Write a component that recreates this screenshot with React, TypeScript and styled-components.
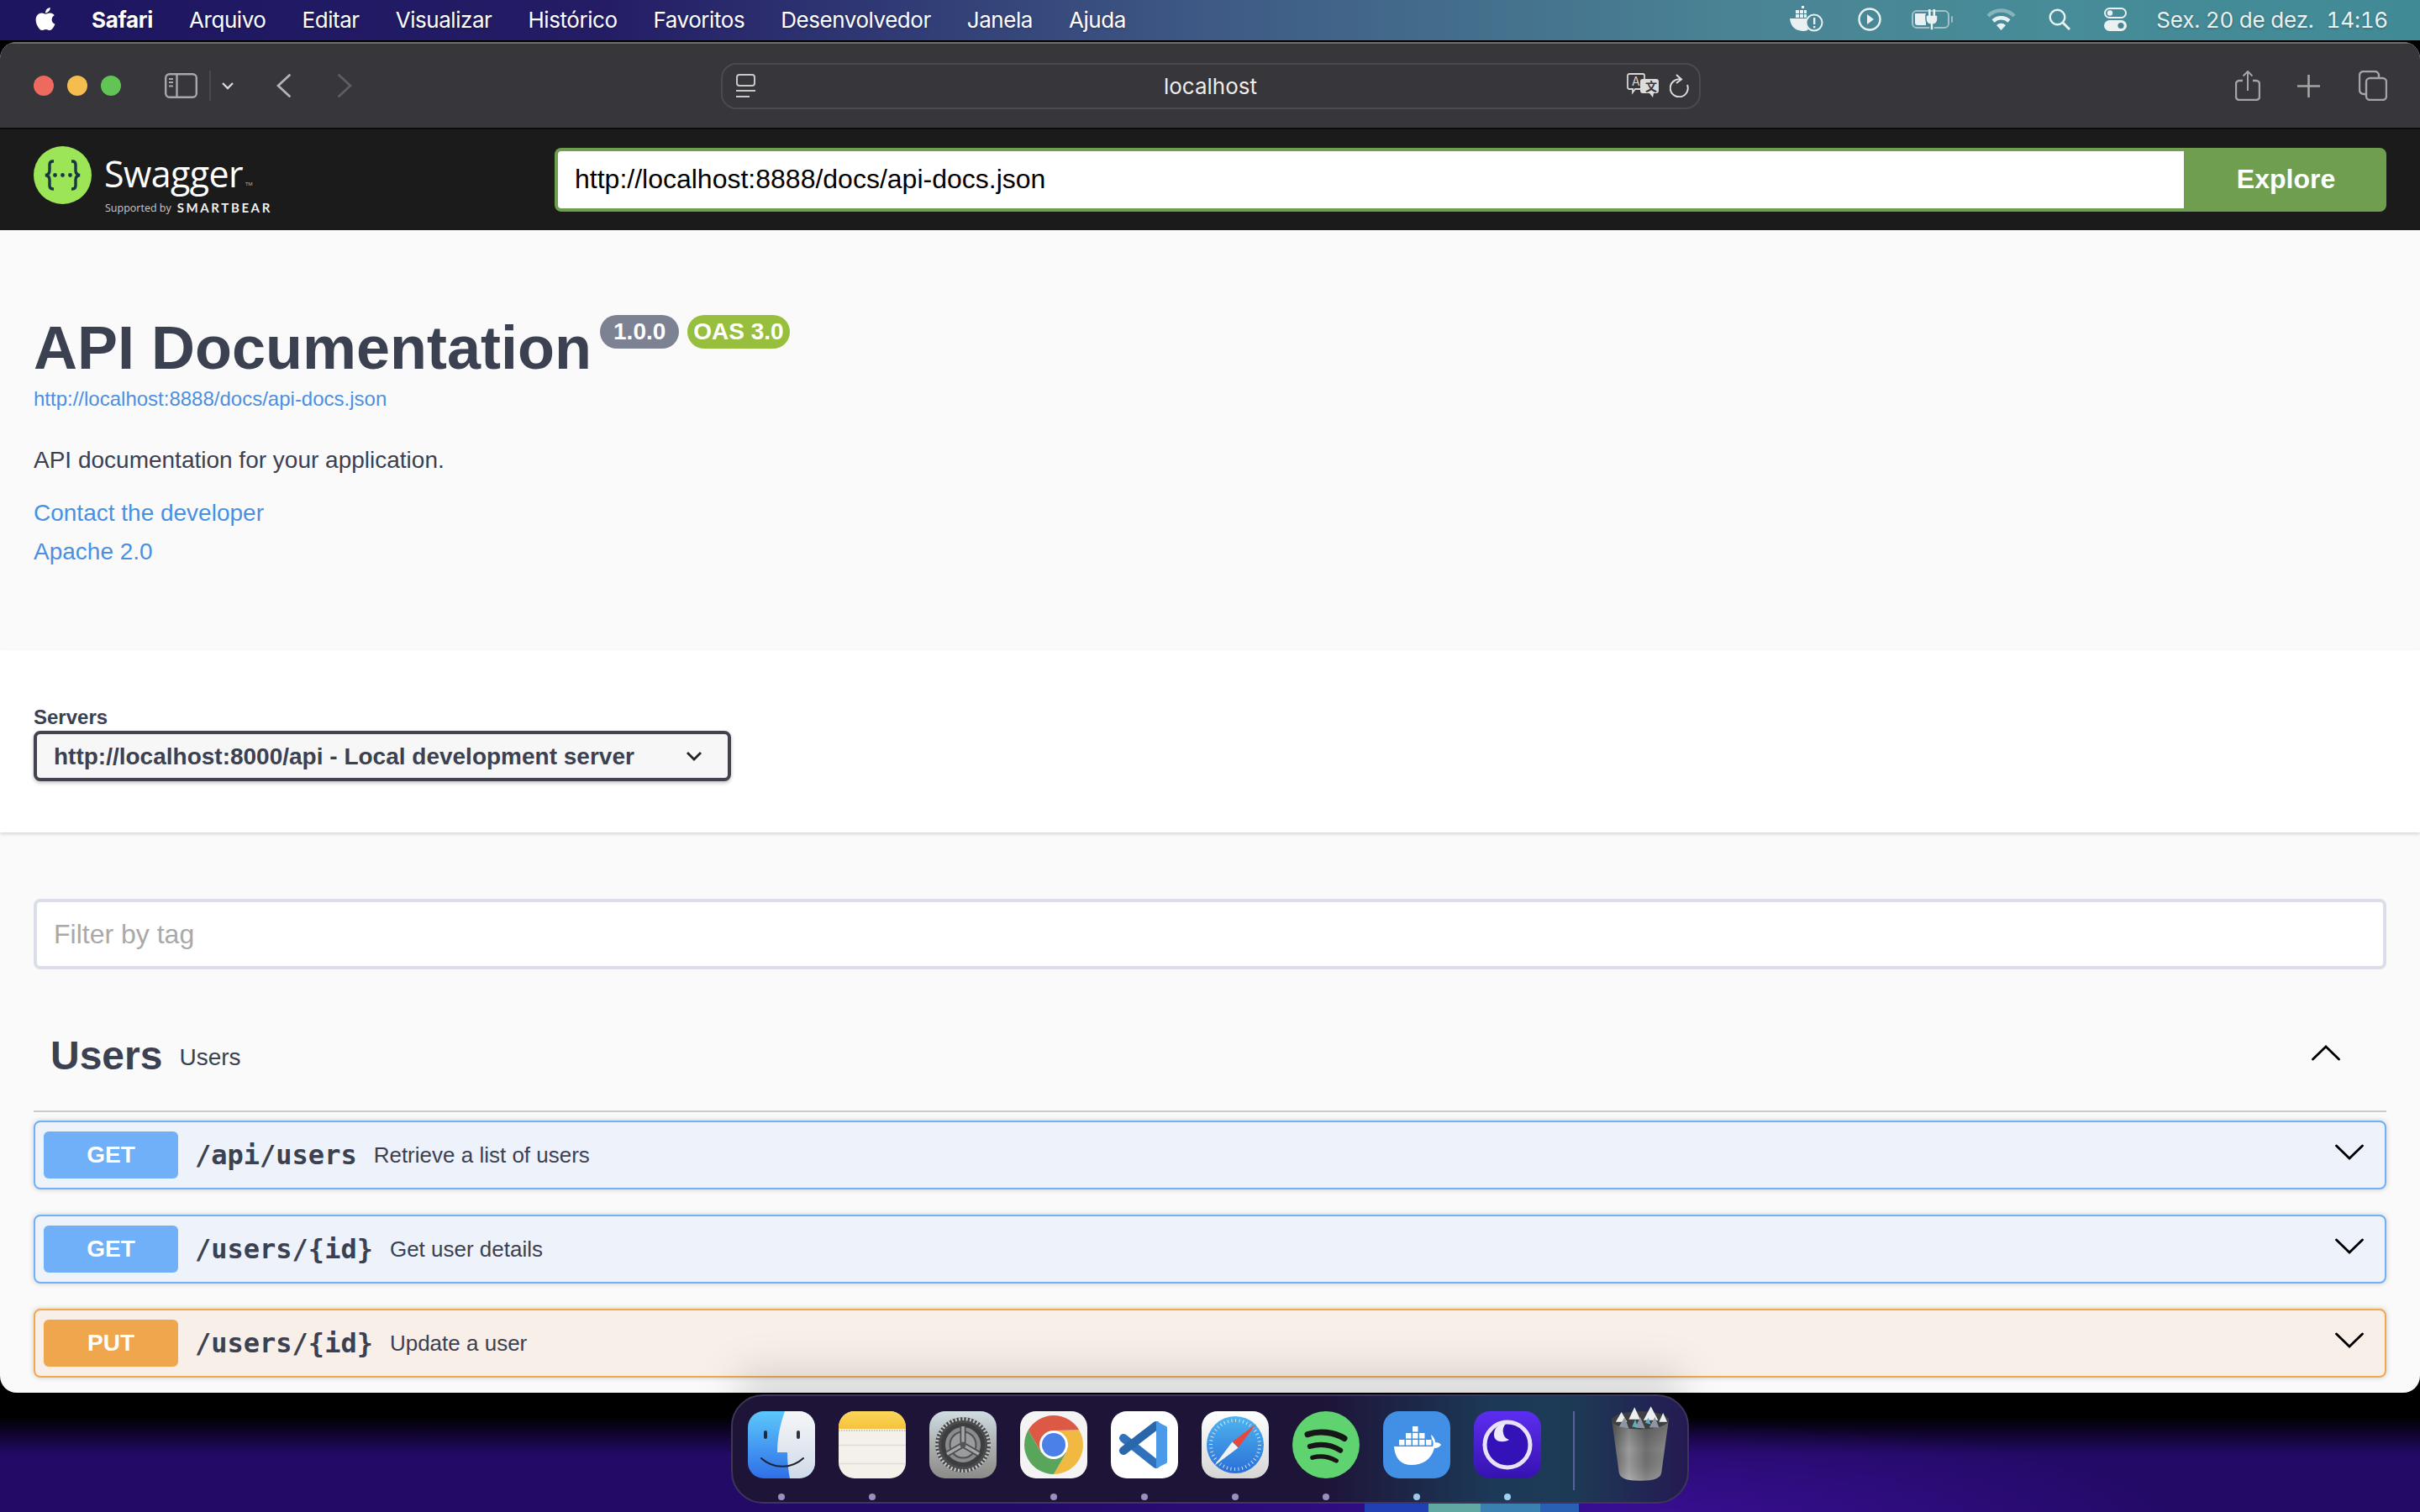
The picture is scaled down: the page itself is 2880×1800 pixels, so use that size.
import styled, { createGlobalStyle } from "styled-components";
import { FaApple } from "react-icons/fa";

const GlobalStyle = createGlobalStyle`
  html, body {
    margin: 0;
    padding: 0;
    background: #000;
    font-family: "Liberation Sans", Arial, sans-serif;
  }
  * { box-sizing: border-box; }
`;

const Desktop = styled.div`
  width: 2880px;
  height: 1800px;
  position: relative;
  overflow: hidden;
  display: flex;
  flex-direction: column;
  background:
    linear-gradient(90deg, #2140b4 0%, #2140b4 30%, #62a8a2 30%, #62a8a2 54%, #3a80b0 54%, #3a80b0 82%, #2a60b4 82%, #2a60b4 100%) 1624px 1790px / 255px 10px no-repeat,
    radial-gradient(ellipse 700px 120px at 1900px 1810px, #3a0f96 0%, rgba(58, 15, 150, 0) 100%),
    linear-gradient(180deg, #000 0, #000 1686px, #230a66 1732px, #230a66 100%);
`;

const MenuBar = styled.header`
  height: 48px;
  flex: none;
  display: flex;
  align-items: center;
  padding: 0 38px 2px 41px;
  color: #fff;
  font-family: Inter, "Liberation Sans", sans-serif;
  font-size: 26px;
  background: linear-gradient(90deg, #1d1560 0%, #241d66 25%, #3e5a85 50%, #4a8494 72%, #478c98 85%, #408a96 100%);
  text-shadow: 0 1px 3px rgba(0, 0, 0, 0.25);
`;

const AppleMark = styled.span`
  width: 26px;
  display: flex;
  justify-content: center;
  margin-right: 42px;
  margin-top: -2px;
  font-size: 31px;
  line-height: 0;
`;

const MenuList = styled.nav`
  display: flex;
  gap: 43px;
`;

const MenuItem = styled.span<{ $bold?: boolean }>`
  font-weight: ${(p) => (p.$bold ? 700 : 400)};
  letter-spacing: ${(p) => (p.$bold ? "-0.3px" : "-0.45px")};
  white-space: nowrap;
`;

const StatusArea = styled.div`
  margin-left: auto;
  display: flex;
  align-items: center;
  color: #e9f1f3;
`;

const StatusIcon = styled.svg<{ $left: number }>`
  display: block;
  margin-left: ${(p) => p.$left}px;
  flex: none;
`;

const Clock = styled.span<{ $left: number }>`
  margin-left: ${(p) => p.$left}px;
  white-space: nowrap;
  font-size: 26px;
  font-variant-numeric: tabular-nums;
  letter-spacing: -0.2px;
`;

const Browser = styled.main`
  margin-top: 2px;
  height: 1608px;
  flex: none;
  position: relative;
  overflow: hidden;
  border-radius: 20px;
  background: #fafafa;
  display: flex;
  flex-direction: column;
`;

const Toolbar = styled.div`
  height: 104px;
  flex: none;
  display: flex;
  align-items: center;
  padding-left: 40px;
  background: #37363b;
  border-top: 2px solid #6c6c6e;
  border-bottom: 2px solid #0a0a0a;
`;

const Lights = styled.div`
  display: flex;
  gap: 16px;
`;

const Light = styled.span<{ $color: string }>`
  width: 24px;
  height: 24px;
  border-radius: 50%;
  background: ${(p) => p.$color};
`;

const ToolIcon = styled.svg<{ $left: number }>`
  display: block;
  flex: none;
  margin-left: ${(p) => p.$left}px;
`;

const ToolDivider = styled.span`
  width: 2px;
  height: 36px;
  margin-left: 14px;
  background: #4a4a4e;
`;

const AddressBar = styled.div`
  width: 1166px;
  height: 55px;
  margin-left: 439px;
  flex: none;
  display: flex;
  align-items: center;
  padding: 0 12px 0 16px;
  border: 2px solid #4b4b4f;
  border-radius: 18px;
`;

const AddressText = styled.span`
  flex: 1;
  text-align: center;
  padding-left: 46px;
  color: #ececec;
  font-family: Inter, "Liberation Sans", sans-serif;
  font-size: 26px;
`;

const AddressIcons = styled.div`
  display: flex;
  align-items: center;
  gap: 13px;
`;

const Topbar = styled.div`
  height: 120px;
  flex: none;
  display: flex;
  align-items: center;
  padding: 0 40px;
  background: #1b1b1b;
`;

const Logo = styled.div`
  width: 620px;
  flex: none;
  display: flex;
  align-items: center;
  gap: 15px;
  margin-top: -12px;
  color: #fff;
`;

const LogoText = styled.div`
  display: flex;
  flex-direction: column;
  padding-top: 24px;
`;

const Wordmark = styled.div`
  font-family: "Open Sans", sans-serif;
  font-size: 43px;
  font-weight: 400;
  line-height: 46px;
  letter-spacing: -0.6px;
  color: #fff;
`;

const Tm = styled.sup`
  font-size: 6px;
  margin-left: 3px;
  vertical-align: 2px;
  line-height: 0;
  letter-spacing: 0;
  color: #bbb;
`;

const Supported = styled.div`
  display: flex;
  align-items: center;
  gap: 7px;
  height: 18px;
  margin-top: 8px;
  padding-left: 1px;
  font-family: "Open Sans", sans-serif;
  font-size: 12.5px;
  white-space: nowrap;
  color: #c8c8c8;
`;

const BearName = styled.span`
  font-family: Lato, sans-serif;
  font-size: 15px;
  font-weight: 700;
  letter-spacing: 2.6px;
  color: #f0f0f0;
`;

const UrlForm = styled.div`
  flex: 1;
  height: 76px;
  display: flex;
`;

const UrlInput = styled.div`
  flex: 1;
  display: flex;
  align-items: center;
  padding: 0 20px 2px;
  border: 4px solid #6f9f4e;
  border-right: 0;
  border-radius: 8px 0 0 8px;
  background: #fff;
  color: #000;
  font-size: 32px;
`;

const ExploreButton = styled.div`
  width: 241px;
  display: flex;
  align-items: center;
  justify-content: center;
  padding: 0 0 1px 2px;
  background: #6f9f4e;
  border-radius: 0 8px 8px 0;
  color: #fff;
  font-size: 32px;
  font-weight: 700;
`;

const Info = styled.section`
  height: 500px;
  flex: none;
  padding: 100px 40px 0;
  background: #fafafa;
  color: #3b4151;
`;

const TitleRow = styled.div`
  display: flex;
  align-items: flex-start;
`;

const Title = styled.h1`
  margin: 0 10px 0 0;
  font-size: 72px;
  line-height: 80px;
  font-weight: 700;
  color: #3b4151;
`;

const Pill = styled.span<{ $color: string; $pad: number }>`
  height: 40px;
  margin: 1px 10px 0 0;
  padding: 0 ${(p) => p.$pad}px;
  display: flex;
  align-items: center;
  border-radius: 22px;
  background: ${(p) => p.$color};
  color: #fff;
  font-size: 28px;
  font-weight: 700;
`;

const SpecLink = styled.a`
  display: block;
  margin-top: 7px;
  font-size: 24px;
  line-height: 28px;
  color: #4a90e2;
`;

const Description = styled.p`
  margin: 39px 0 23px;
  font-size: 28px;
  line-height: 40px;
  color: #3b4151;
`;

const InfoLink = styled.a`
  display: block;
  margin-bottom: 6px;
  font-size: 28px;
  line-height: 40px;
  color: #4a90e2;
`;

const Servers = styled.section`
  height: 217px;
  flex: none;
  padding: 66px 40px 0;
  background: #fff;
  box-shadow: 0 2px 4px rgba(0, 0, 0, 0.15);
  position: relative;
`;

const ServersLabel = styled.div`
  font-size: 24px;
  line-height: 28px;
  font-weight: 700;
  color: #3b4151;
  margin-bottom: 2px;
`;

const ServerSelect = styled.div`
  width: 830px;
  height: 60px;
  display: flex;
  align-items: center;
  justify-content: space-between;
  padding: 1px 30px 0 20px;
  border: 4px solid #41444e;
  border-radius: 8px;
  background: #f7f7f7;
  box-shadow: 0 2px 4px rgba(0, 0, 0, 0.25);
  font-size: 28px;
  font-weight: 700;
  color: #3b4151;
`;

const Content = styled.section`
  padding: 79px 40px 0;
  color: #3b4151;
`;

const FilterBox = styled.div`
  height: 84px;
  display: flex;
  align-items: center;
  padding: 0 20px 0 20px;
  border: 4px solid #d9dee8;
  border-radius: 8px;
  background: #fff;
  color: #a9a9a9;
  font-size: 32px;
`;

const TagRow = styled.div`
  height: 134px;
  margin-top: 36px;
  display: flex;
  align-items: center;
  padding: 2px 55px 0 20px;
  border-bottom: 2px solid #cbcbcb;
`;

const TagName = styled.h3`
  margin: 0 20px 0 0;
  font-size: 48px;
  line-height: 60px;
  font-weight: 700;
  color: #3b4151;
`;

const TagNote = styled.span`
  flex: 1;
  font-size: 28px;
  padding-top: 4px;
  color: #3b4151;
`;

const Ops = styled.div`
  margin-top: 10px;
  display: flex;
  flex-direction: column;
  gap: 30px;
`;

const OpRow = styled.div<{ $border: string; $bg: string }>`
  height: 82px;
  display: flex;
  align-items: center;
  padding: 0 25px 0 10px;
  border: 2px solid ${(p) => p.$border};
  border-radius: 8px;
  background: ${(p) => p.$bg};
  box-shadow: 0 0 6px rgba(0, 0, 0, 0.19);
`;

const Method = styled.span<{ $bg: string }>`
  width: 160px;
  height: 56px;
  flex: none;
  display: flex;
  align-items: center;
  justify-content: center;
  border-radius: 6px;
  background: ${(p) => p.$bg};
  color: #fff;
  font-size: 28px;
  font-weight: 700;
`;

const OpPath = styled.span`
  margin: 0 20px;
  font-family: "DejaVu Sans Mono", monospace;
  font-size: 32px;
  font-weight: 700;
  color: #3b4151;
`;

const OpSummary = styled.span`
  flex: 1;
  font-size: 26px;
  color: #3b4151;
`;

const Chevron = styled.svg`
  display: block;
  flex: none;
  margin-top: -7px;
`;

const DockShade = styled.div`
  position: absolute;
  left: 880px;
  width: 1120px;
  bottom: -38px;
  height: 62px;
  background: rgba(0, 0, 0, 0.14);
  filter: blur(24px);
`;

const Dock = styled.footer`
  margin-top: 2px;
  align-self: center;
  width: 1140px;
  height: 130px;
  flex: none;
  display: flex;
  padding: 18px 0 0 18px;
  border: 2px solid #3e3558;
  border-radius: 38px;
  background: linear-gradient(90deg, #1e1438 0%, #1e1438 62%, #1c3a58 80%, #1d3a55 88%, #241a52 100%);
`;

const DockItem = styled.div`
  width: 80px;
  margin-right: 28px;
  display: flex;
  flex-direction: column;
  align-items: center;
  flex: none;
`;

const DockTile = styled.div`
  width: 80px;
  height: 80px;
  display: flex;
  align-items: center;
  justify-content: center;
  overflow: visible;
`;

const DockDot = styled.span<{ $on: boolean; $color?: string }>`
  width: 8px;
  height: 8px;
  margin-top: 18px;
  border-radius: 50%;
  background: ${(p) => (p.$on ? p.$color || "#9b8fc0" : "transparent")};
`;

const DockDivider = styled.span`
  width: 2px;
  height: 94px;
  margin: 0 38px 0 10px;
  background: #56609a;
  flex: none;
`;

const TrashSlot = styled.div`
  width: 80px;
  flex: none;
  margin-top: -8px;
  display: flex;
  justify-content: center;
`;

const stroke = "#e9f1f3";

const DockerStatus = () => (
  <StatusIcon $left={0} width="40" height="32" viewBox="0 0 40 32">
    <g fill={stroke}>
      <rect x="14" y="0" width="3" height="3" />
      <rect x="7" y="5" width="4" height="4" />
      <rect x="12" y="5" width="4" height="4" />
      <rect x="17" y="5" width="3" height="4" />
      <rect x="7" y="10" width="4" height="4" />
      <rect x="12" y="10" width="4" height="4" />
      <rect x="17" y="10" width="3" height="4" />
      <path d="M0 15h20v3a11 11 0 0 0 2 10c-1 1-3 2-5 2C7 30 1 25 0 15z" />
    </g>
    <circle cx="29" cy="20" r="9.5" fill="none" stroke={stroke} strokeWidth="2" />
    <rect x="28" y="14" width="2.4" height="8" fill={stroke} />
    <rect x="28" y="24" width="2.4" height="2.4" fill={stroke} />
  </StatusIcon>
);

const PlayStatus = () => (
  <StatusIcon $left={41} width="28" height="28" viewBox="0 0 28 28">
    <circle cx="14" cy="14" r="12.5" fill="none" stroke={stroke} strokeWidth="2.4" />
    <path d="M11 8l8 6-8 6z" fill={stroke} />
  </StatusIcon>
);

const BatteryStatus = () => (
  <StatusIcon $left={36} width="50" height="26" viewBox="0 0 50 26">
    <rect x="1" y="3" width="43" height="20" rx="5" fill="none" stroke={stroke} strokeOpacity="0.55" strokeWidth="2" />
    <rect x="47" y="9" width="2" height="8" rx="1" fill={stroke} fillOpacity="0.5" />
    <path d="M4 6h13v14H7a3 3 0 0 1-3-3z" fill={stroke} />
    <path d="M17 8h14v5c0 4-3 6-5 6v7h-4v-7c-2 0-5-2-5-6z" fill={stroke} stroke="#4a8494" strokeWidth="1.5" />
    <rect x="20" y="1" width="2.6" height="8" fill={stroke} />
    <rect x="25.5" y="1" width="2.6" height="8" fill={stroke} />
  </StatusIcon>
);

const WifiStatus = () => (
  <StatusIcon $left={39} width="35" height="26" viewBox="0 0 35 26">
    <path d="M2 9a22 22 0 0 1 31 0" fill="none" stroke={stroke} strokeOpacity="0.4" strokeWidth="4.5" />
    <path d="M8 15a14 14 0 0 1 19 0" fill="none" stroke={stroke} strokeWidth="4.5" />
    <path d="M12 20a8 8 0 0 1 11 0l-5.500 6z" fill={stroke} />
  </StatusIcon>
);

const SearchStatus = () => (
  <StatusIcon $left={39} width="26" height="26" viewBox="0 0 26 26">
    <circle cx="10.500" cy="10.500" r="8.800" fill="none" stroke={stroke} strokeWidth="2.4" />
    <path d="M17 17l8 8" stroke={stroke} strokeWidth="3" />
  </StatusIcon>
);

const ControlStatus = () => (
  <StatusIcon $left={40} width="27" height="28" viewBox="0 0 27 28">
    <rect x="1" y="1" width="25" height="11" rx="5.500" fill="none" stroke={stroke} strokeWidth="2" />
    <circle cx="7" cy="6.500" r="3.200" fill={stroke} />
    <rect x="0" y="15" width="27" height="13" rx="6.500" fill={stroke} />
    <circle cx="20" cy="21.500" r="3.600" fill="#4a8494" />
  </StatusIcon>
);

const SidebarIcon = () => (
  <ToolIcon $left={52} width="39" height="30" viewBox="0 0 39 30" fill="none" stroke="#a8a8aa" strokeWidth="2.4">
    <rect x="1.200" y="1.200" width="36.600" height="27.600" rx="4.500" />
    <path d="M14.500 1.500v27" />
    <path d="M5 7h5M5 11h5M5 15.500h5" strokeWidth="1.800" />
  </ToolIcon>
);

const SmallChevron = () => (
  <ToolIcon $left={13} width="14" height="9" viewBox="0 0 14 9" fill="none" stroke="#d8d8d8" strokeWidth="2.400">
    <path d="M1 1l6 6 6-6" />
  </ToolIcon>
);

const Arrow = ({ left, dir, color }: { left: number; dir: "l" | "r"; color: string }) => (
  <ToolIcon $left={left} width="17" height="28" viewBox="0 0 17 28" fill="none" stroke={color} strokeWidth="2.800" strokeLinecap="round">
    <path d={dir === "l" ? "M15.500 1.500L2 14l13.500 12.500" : "M1.500 1.500L15 14 1.500 26.500"} />
  </ToolIcon>
);

const PageMenuIcon = () => (
  <svg width="23" height="28" viewBox="0 0 23 28" fill="none" stroke="#c8c8c8" strokeWidth="2">
    <rect x="1" y="1" width="21" height="13" rx="3" />
    <path d="M0 20h23M0 27h16" />
  </svg>
);

const TranslateIcon = () => (
  <svg width="38" height="30" viewBox="0 0 38 30">
    <path d="M3 1h16a2 2 0 0 1 2 2v14a2 2 0 0 1-2 2H10l-3 4v-4H3a2 2 0 0 1-2-2V3a2 2 0 0 1 2-2z" fill="#37363b" stroke="#d6d6d6" strokeWidth="1.800" />
    <text x="6" y="15" fontSize="14" fontFamily="Inter, sans-serif" fill="#d6d6d6">A</text>
    <path d="M19 7h16a3 3 0 0 1 3 3v11a3 3 0 0 1-3 3h-3l-1 5-4-5h-8a3 3 0 0 1-3-3V10a3 3 0 0 1 3-3z" fill="#dcdcdc" />
    <text x="22" y="21" fontSize="14" fontWeight="700" fontFamily="'Noto Sans CJK SC', sans-serif" fill="#37363b">文</text>
  </svg>
);

const ReloadIcon = () => (
  <svg width="23" height="28" viewBox="0 0 23 28" fill="none" stroke="#dcdcdc" strokeWidth="2">
    <path d="M13 6.500A10.500 10.500 0 1 0 21 13" />
    <path d="M8 1l6 5.500L8 11" />
  </svg>
);

const ShareIcon = () => (
  <ToolIcon $left={636} width="30" height="36" viewBox="0 0 30 36" fill="none" stroke="#a5a5a8" strokeWidth="2.400">
    <path d="M9 12H5a4 4 0 0 0-4 4v15a4 4 0 0 0 4 4h20a4 4 0 0 0 4-4V16a4 4 0 0 0-4-4h-4" />
    <path d="M15 24V1M9.500 6.500L15 1l5.500 5.500" strokeWidth="2" />
  </ToolIcon>
);

const PlusIcon = () => (
  <ToolIcon $left={44} width="27" height="27" viewBox="0 0 27 27" stroke="#a5a5a8" strokeWidth="2.600">
    <path d="M13.500 0v27M0 13.500h27" />
  </ToolIcon>
);

const TabsIcon = () => (
  <ToolIcon $left={46} width="34" height="36" viewBox="0 0 34 36" fill="none" stroke="#a5a5a8" strokeWidth="2.400">
    <path d="M9 28H6a5 5 0 0 1-5-5V6a5 5 0 0 1 5-5h13a5 5 0 0 1 5 5v3" />
    <rect x="9" y="9" width="24" height="26" rx="4.500" />
  </ToolIcon>
);

const SwaggerMark = () => (
  <svg width="69" height="69" viewBox="0 0 69 69">
    <circle cx="34.500" cy="34.500" r="34.500" fill="#9ce556" />
    <g fill="none" stroke="#173646" strokeWidth="3.400">
      <path d="M24 18h-1c-3 0-4 1.500-4 4v7c0 3-1.500 5-5 5.500 3.500.5 5 2.500 5 5.500v7c0 2.500 1 4 4 4h1" />
      <path d="M45 18h1c3 0 4 1.500 4 4v7c0 3 1.500 5 5 5.500-3.500.5-5 2.500-5 5.500v7c0 2.500-1 4-4 4h-1" />
    </g>
    <g fill="#173646">
      <circle cx="25.500" cy="34.500" r="2.400" />
      <circle cx="34.500" cy="34.500" r="2.400" />
      <circle cx="43.500" cy="34.500" r="2.400" />
    </g>
  </svg>
);

const BigChevron = ({ up }: { up?: boolean }) => (
  <Chevron width="34" height="19" viewBox="0 0 34 19" fill="none" stroke="#000" strokeWidth="2.800" strokeLinecap="round">
    <path d={up ? "M1.500 17L17 2l15.500 15" : "M1.500 2L17 17 32.500 2"} />
  </Chevron>
);

const SelectChevron = () => (
  <svg width="20" height="13" viewBox="0 0 20 13" fill="none" stroke="#222" strokeWidth="2.800">
    <path d="M2 2l8 8 8-8" />
  </svg>
);

const FinderIcon = () => (
  <svg width="80" height="80" viewBox="0 0 80 80">
    <defs>
      <linearGradient id="finderBlue" x1="0" y1="0" x2="0" y2="1">
        <stop offset="0" stopColor="#5cc8fb" />
        <stop offset="1" stopColor="#2f6fe8" />
      </linearGradient>
      <linearGradient id="finderLight" x1="0" y1="0" x2="0" y2="1">
        <stop offset="0" stopColor="#f5f6f8" />
        <stop offset="1" stopColor="#d0dbe9" />
      </linearGradient>
      <clipPath id="finderClip">
        <rect width="80" height="80" rx="19" />
      </clipPath>
    </defs>
    <g clipPath="url(#finderClip)">
      <rect width="80" height="80" fill="url(#finderBlue)" />
      <path d="M44 0h36v80H50c-2-10-3-20-3-31H35c0-18 4-35 9-49z" fill="url(#finderLight)" />
    </g>
    <rect x="19" y="23" width="4" height="10" rx="2" fill="#1f2b3d" />
    <rect x="58" y="23" width="4" height="10" rx="2" fill="#2d3440" />
    <path d="M16 56c14 13 36 13 50 0" fill="none" stroke="#1c2330" strokeWidth="2" strokeLinecap="round" />
  </svg>
);

const NotesIcon = () => (
  <svg width="80" height="80" viewBox="0 0 80 80">
    <defs>
      <linearGradient id="notesTop" x1="0" y1="0" x2="0" y2="1">
        <stop offset="0" stopColor="#fbd75a" />
        <stop offset="1" stopColor="#f5c23d" />
      </linearGradient>
      <clipPath id="notesClip">
        <rect width="80" height="80" rx="19" />
      </clipPath>
    </defs>
    <g clipPath="url(#notesClip)">
      <rect width="80" height="80" fill="#f3f1ea" />
      <rect width="80" height="21" fill="url(#notesTop)" />
      <path d="M0 23h80" stroke="#c9c7c0" strokeWidth="2" strokeDasharray="1.500 1.500" />
      <path d="M0 40.500h80M0 62.500h80" stroke="#dddbd5" strokeWidth="1.500" />
    </g>
  </svg>
);

const SettingsIcon = () => (
  <svg width="80" height="80" viewBox="0 0 80 80">
    <defs>
      <linearGradient id="settingsBg" x1="0" y1="0" x2="0" y2="1">
        <stop offset="0" stopColor="#cfdde2" />
        <stop offset="0.55" stopColor="#a9acab" />
        <stop offset="1" stopColor="#8b8b88" />
      </linearGradient>
    </defs>
    <rect width="80" height="80" rx="19" fill="url(#settingsBg)" />
    <circle cx="40" cy="40" r="33" fill="#4a4b4d" />
    <circle cx="40" cy="40" r="31" fill="none" stroke="#c8c9c9" strokeWidth="4" strokeDasharray="2 2.400" />
    <circle cx="40" cy="40" r="25" fill="#8a8b8c" />
    <circle cx="40" cy="40" r="23.500" fill="none" stroke="#3d3e40" strokeWidth="5" />
    <circle cx="40" cy="40" r="15.500" fill="#9b9c9d" stroke="#505154" strokeWidth="2" />
    <path d="M40 40V18M40 40L21 51M40 40l19 11" stroke="#4c4d50" strokeWidth="7" />
    <path d="M40 40V18M40 40L21 51M40 40l19 11" stroke="#a6a7a8" strokeWidth="3.500" />
    <circle cx="40" cy="40" r="3.500" fill="#55565a" />
  </svg>
);

const ChromeIcon = () => (
  <svg width="80" height="80" viewBox="0 0 80 80">
    <rect width="80" height="80" rx="19" fill="#f4f4f4" />
    <path d="M9.700 22.500A35 35 0 0 1 70.300 22.500L40 23 25 49z" fill="#dc5a45" />
    <path d="M70.300 22.500A35 35 0 0 1 40 75L55 49 40 23z" fill="#f2b942" />
    <path d="M40 75A35 35 0 0 1 9.700 22.500L25 49 55 49z" fill="#5aa55c" />
    <circle cx="40" cy="40" r="17" fill="#fff" />
    <circle cx="40" cy="40" r="14" fill="#4a80e8" />
  </svg>
);

const VsCodeIcon = () => (
  <svg width="80" height="80" viewBox="0 0 80 80">
    <rect width="80" height="80" rx="19" fill="#fff" />
    <path d="M15 32l39 31" stroke="#2f72bb" strokeWidth="10" strokeLinecap="round" />
    <path d="M15 47L54 17" stroke="#2a67aa" strokeWidth="10" strokeLinecap="round" />
    <path d="M54 12l12 6c.6.400 1 1 1 2v40c0 1-.4 1.600-1 2l-12 6z" fill="#4a9ae9" />
  </svg>
);

const SafariIcon = () => (
  <svg width="80" height="80" viewBox="0 0 80 80">
    <defs>
      <linearGradient id="safariBg" x1="0" y1="0" x2="0" y2="1">
        <stop offset="0" stopColor="#fff" />
        <stop offset="1" stopColor="#d6d6d6" />
      </linearGradient>
      <linearGradient id="safariDial" x1="0" y1="0" x2="0" y2="1">
        <stop offset="0" stopColor="#4fb4ee" />
        <stop offset="1" stopColor="#2a6fd8" />
      </linearGradient>
    </defs>
    <rect width="80" height="80" rx="19" fill="url(#safariBg)" />
    <circle cx="40" cy="40" r="34" fill="url(#safariDial)" />
    <circle cx="40" cy="40" r="29" fill="none" stroke="#cfe5f8" strokeWidth="4" strokeDasharray="1 3.550" />
    <path d="M65 15L36.500 36.500l7 7z" fill="#e8473c" />
    <path d="M15 65l21.500-28.500 7 7z" fill="#f3f3f3" />
  </svg>
);

const SpotifyIcon = () => (
  <svg width="84" height="84" viewBox="0 0 84 84">
    <circle cx="42" cy="42" r="42" fill="#5fd36f" />
    <g fill="none" stroke="#161616" strokeLinecap="round">
      <path d="M19 29c15-5 33-3 46 5" strokeWidth="7.500" />
      <path d="M22 44c13-4 27-2 38 5" strokeWidth="6.500" />
      <path d="M25 58c11-3 21-1 30 4" strokeWidth="5.500" />
    </g>
  </svg>
);

const DockerIcon = () => (
  <svg width="80" height="80" viewBox="0 0 80 80">
    <rect width="80" height="80" rx="19" fill="#4190e5" />
    <g fill="#fff">
      <rect x="35" y="18" width="6.500" height="6.500" />
      <rect x="27" y="26" width="6.500" height="6.500" />
      <rect x="35" y="26" width="6.500" height="6.500" />
      <rect x="43" y="26" width="6.500" height="6.500" />
      <rect x="19" y="34" width="6.500" height="6.500" />
      <rect x="27" y="34" width="6.500" height="6.500" />
      <rect x="35" y="34" width="6.500" height="6.500" />
      <rect x="43" y="34" width="6.500" height="6.500" />
      <rect x="51" y="34" width="6.500" height="6.500" />
      <path d="M13 42h46c1-1 1-6-1-9l-1-5c3 2 5 6 5 9 3 0 6 1 7 3-2 3-5 4-8 4-4 14-14 20-27 20-12 0-20-7-21-22z" />
    </g>
  </svg>
);

const OrbitIcon = () => (
  <svg width="80" height="80" viewBox="0 0 80 80">
    <defs>
      <linearGradient id="orbitBg" x1="0" y1="0" x2="0" y2="1">
        <stop offset="0" stopColor="#5c2ef0" />
        <stop offset="1" stopColor="#3612b0" />
      </linearGradient>
    </defs>
    <rect width="80" height="80" rx="19" fill="url(#orbitBg)" />
    <circle cx="40" cy="40" r="27" fill="#3412b8" stroke="#e8e2f8" strokeWidth="5" />
    <path d="M24 28c0-8 6-13 14-13-3 3-4 7-3 11 1 5 4 7 7 8-7 4-18 3-18-6z" fill="#eee9fb" />
  </svg>
);

const TrashIcon = () => (
  <svg width="70" height="92" viewBox="0 0 72 92">
    <defs>
      <linearGradient id="trashBody" x1="0" y1="0" x2="1" y2="0">
        <stop offset="0" stopColor="#5f5f5f" />
        <stop offset="0.3" stopColor="#9c9c9c" />
        <stop offset="0.6" stopColor="#707070" />
        <stop offset="1" stopColor="#8c8c8c" />
      </linearGradient>
      <linearGradient id="trashFade" x1="0" y1="0" x2="0" y2="1">
        <stop offset="0" stopColor="#000" stopOpacity="0.25" />
        <stop offset="0.5" stopColor="#000" stopOpacity="0" />
        <stop offset="1" stopColor="#fff" stopOpacity="0.18" />
      </linearGradient>
    </defs>
    <path d="M1 16L10 82c1 7 9 10 26 10s25-3 26-10L71 16z" fill="url(#trashBody)" />
    <path d="M1 16L10 82c1 7 9 10 26 10s25-3 26-10L71 16z" fill="url(#trashFade)" />
    <ellipse cx="36" cy="18" rx="35" ry="11" fill="#3f3f42" />
    <path d="M6 20L13 8l7 12zM22 17L29 2l7 15zM40 18L49 1l9 17zM59 20l5-11 5 11z" fill="#eceef0" />
    <path d="M10 26l7-12 5 14zM30 27l6-13 6 14zM47 27l7-13 5 13z" fill="#8d96a2" />
    <path d="M26 26l4-9 3 10zM42 21l4-6 3 8z" fill="#5ab0c0" />
  </svg>
);

const dockApps = [
  { key: "finder", icon: <FinderIcon />, on: true },
  { key: "notes", icon: <NotesIcon />, on: true },
  { key: "settings", icon: <SettingsIcon />, on: false },
  { key: "chrome", icon: <ChromeIcon />, on: true },
  { key: "vscode", icon: <VsCodeIcon />, on: true },
  { key: "safari", icon: <SafariIcon />, on: true },
  { key: "spotify", icon: <SpotifyIcon />, on: true },
  { key: "docker", icon: <DockerIcon />, on: true, color: "#9fc8e8" },
  { key: "orbit", icon: <OrbitIcon />, on: true, color: "#9fd0ee" },
];

const menuItems = ["Arquivo", "Editar", "Visualizar", "Histórico", "Favoritos", "Desenvolvedor", "Janela", "Ajuda"];

const blue = { border: "#6fb0f9", bg: "#edf2fb", method: "#6fb0f9" };
const orange = { border: "#f3a84f", bg: "#f8efe9", method: "#f0a64d" };

const operations = [
  { method: "GET", path: "/api/users", summary: "Retrieve a list of users", tone: blue },
  { method: "GET", path: "/users/{id}", summary: "Get user details", tone: blue },
  { method: "PUT", path: "/users/{id}", summary: "Update a user", tone: orange },
];

export default function App() {
  return (
    <Desktop>
      <GlobalStyle />
      <MenuBar>
        <AppleMark>
          <FaApple />
        </AppleMark>
        <MenuList>
          <MenuItem $bold>Safari</MenuItem>
          {menuItems.map((item) => (
            <MenuItem key={item}>{item}</MenuItem>
          ))}
        </MenuList>
        <StatusArea>
          <DockerStatus />
          <PlayStatus />
          <BatteryStatus />
          <WifiStatus />
          <SearchStatus />
          <ControlStatus />
          <Clock $left={35}>Sex. 20 de dez.</Clock>
          <Clock $left={15}>14:16</Clock>
        </StatusArea>
      </MenuBar>

      <Browser>
        <Toolbar>
          <Lights>
            <Light $color="#ee6a5f" />
            <Light $color="#f5bd4f" />
            <Light $color="#61c454" />
          </Lights>
          <SidebarIcon />
          <ToolDivider />
          <SmallChevron />
          <Arrow left={51} dir="l" color="#b4b4b6" />
          <Arrow left={56} dir="r" color="#5e5e62" />
          <AddressBar>
            <PageMenuIcon />
            <AddressText>localhost</AddressText>
            <AddressIcons>
              <TranslateIcon />
              <ReloadIcon />
            </AddressIcons>
          </AddressBar>
          <ShareIcon />
          <PlusIcon />
          <TabsIcon />
        </Toolbar>

        <Topbar>
          <Logo>
            <SwaggerMark />
            <LogoText>
              <Wordmark>
                Swagger<Tm>TM</Tm>
              </Wordmark>
              <Supported>
                Supported by <BearName>SMARTBEAR</BearName>
              </Supported>
            </LogoText>
          </Logo>
          <UrlForm>
            <UrlInput>http://localhost:8888/docs/api-docs.json</UrlInput>
            <ExploreButton>Explore</ExploreButton>
          </UrlForm>
        </Topbar>

        <Info>
          <TitleRow>
            <Title>API Documentation</Title>
            <Pill $color="#7d8293" $pad={16}>1.0.0</Pill>
            <Pill $color="#97bf3d" $pad={7}>OAS 3.0</Pill>
          </TitleRow>
          <SpecLink>http://localhost:8888/docs/api-docs.json</SpecLink>
          <Description>API documentation for your application.</Description>
          <InfoLink>Contact the developer</InfoLink>
          <InfoLink>Apache 2.0</InfoLink>
        </Info>

        <Servers>
          <ServersLabel>Servers</ServersLabel>
          <ServerSelect>
            http://localhost:8000/api - Local development server
            <SelectChevron />
          </ServerSelect>
        </Servers>

        <Content>
          <FilterBox>Filter by tag</FilterBox>
          <TagRow>
            <TagName>Users</TagName>
            <TagNote>Users</TagNote>
            <BigChevron up />
          </TagRow>
          <Ops>
            {operations.map((op) => (
              <OpRow key={op.method + op.path} $border={op.tone.border} $bg={op.tone.bg}>
                <Method $bg={op.tone.method}>{op.method}</Method>
                <OpPath>{op.path}</OpPath>
                <OpSummary>{op.summary}</OpSummary>
                <BigChevron />
              </OpRow>
            ))}
          </Ops>
        </Content>
        <DockShade />
      </Browser>

      <Dock>
        {dockApps.map((app) => (
          <DockItem key={app.key}>
            <DockTile>{app.icon}</DockTile>
            <DockDot $on={app.on} $color={app.color} />
          </DockItem>
        ))}
        <DockDivider />
        <TrashSlot>
          <TrashIcon />
        </TrashSlot>
      </Dock>
    </Desktop>
  );
}
